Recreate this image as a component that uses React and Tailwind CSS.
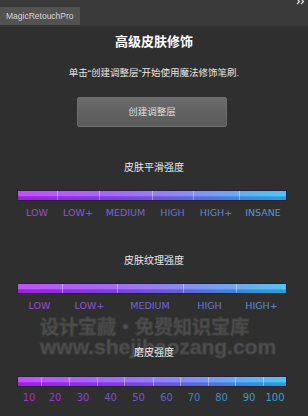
import React from "react";

const cjk = { fontFamily: '"Liberation Sans","Noto Sans CJK SC",sans-serif' };

function Bar({ widths, labels, colors, labelClass }) {
  return (
    <div className="ml-[17px] w-[270px] flex flex-col">
      <div className="relative h-[11px] w-full border border-[#2a1f3a] bg-[linear-gradient(to_right,#b126f7,#8f45f2_35%,#6f6cee_60%,#4a92ec_80%,#28b5ea)] flex overflow-hidden">
        {widths.map((w, i) => (
          <div
            key={i}
            className={i < widths.length - 1 ? "h-full shrink-0 border-r border-white/40" : "h-full flex-1"}
            style={i < widths.length - 1 ? { width: w } : undefined}
          />
        ))}
        <div className="absolute left-0 right-0 top-0 h-[5px] bg-white/20" />
        <div className="absolute left-0 right-0 bottom-0 h-[3px] bg-black/10" />
      </div>
      <div className={"flex " + labelClass} style={{ fontFamily: '"DejaVu Sans","Liberation Sans",sans-serif' }}>
        {widths.map((w, i) => (
          <div
            key={i}
            className="shrink-0 flex justify-center whitespace-nowrap"
            style={{ width: w, color: colors[i] }}
          >
            {labels[i]}
          </div>
        ))}
      </div>
    </div>
  );
}

export default function App() {
  return (
    <div className="relative w-[308px] h-[416px] overflow-hidden bg-[#2f2f2f]" style={cjk}>
      <div className="h-[27px] bg-[#3a3a3a] flex flex-col relative">
        <div className="h-[7px]" />
        <div className="h-[18px] w-[80px] bg-[#525252] flex items-center pl-[6px] text-[8.5px] text-[#d6d6d6] whitespace-nowrap" style={{ fontFamily: '"Liberation Sans",sans-serif' }}>
          MagicRetouchPro
        </div>
        <div className="h-[2px] bg-[#353535]" />
        <svg className="absolute right-[3px] top-[-2px]" width="9" height="7" viewBox="0 0 9 7">
          <path d="M1 1 L3.5 3.5 L1 6 M5 1 L7.5 3.5 L5 6" stroke="#e0e0e0" strokeWidth="1.2" fill="none" />
        </svg>
      </div>

      <div className="flex flex-col">
        <div className="mt-[6px] text-center leading-[18px] text-[13px] font-bold text-white">高级皮肤修饰</div>
        <div className="mt-[15px] text-center leading-[14px] text-[9.5px] text-[#e6e6e6]">
          单击“创建调整层”开始使用魔法修饰笔刷.
        </div>
        <div className="mt-[17px] self-start ml-[77px] w-[150px] h-[30px] rounded-[2px] border border-[#6e6e6e] bg-[linear-gradient(to_bottom,#6a6a6a,#5a5a5a)] flex items-center justify-center text-[9.5px] text-[#dedede]">
          创建调整层
        </div>

        <div className="mt-[34px] text-center leading-[14px] text-[10px] text-[#e8e8e8]">皮肤平滑强度</div>
        <div className="mt-[15px]">
          <Bar
            widths={[40, 42, 53, 41, 46, 48]}
            labels={["LOW", "LOW+", "MEDIUM", "HIGH", "HIGH+", "INSANE"]}
            colors={["#9a4fd2", "#8c55d6", "#7c60d8", "#6a72d2", "#5d84d2", "#4f98d2"]}
            labelClass="mt-[6px] leading-[12px] text-[9.5px]"
          />
        </div>

        <div className="mt-[35px] text-center leading-[14px] text-[10px] text-[#e8e8e8]">皮肤纹理强度</div>
        <div className="mt-[15px]">
          <Bar
            widths={[45, 55, 66, 53, 51]}
            labels={["LOW", "LOW+", "MEDIUM", "HIGH", "HIGH+"]}
            colors={["#9a4cd4", "#8a58d8", "#7463d8", "#627cd4", "#5a8ed4"]}
            labelClass="mt-[6px] leading-[12px] text-[9.5px]"
          />
        </div>

        <div className="relative z-10 mt-[34px] text-center leading-[14px] text-[10px] text-[#f0f0f0]">磨皮强度</div>
        <div className="mt-[16px]">
          <Bar
            widths={[24, 28, 28, 27, 29, 27, 28, 27, 28, 24]}
            labels={["10", "20", "30", "40", "50", "60", "70", "80", "90", "100"]}
            colors={["#a232d4", "#9a36d2", "#8e40d2", "#7e4ed2", "#6c5ad0", "#5a68cc", "#4a7cc8", "#3e8cc6", "#3a98c8", "#34a2cc"]}
            labelClass="mt-[5px] leading-[12px] text-[10px]"
          />
        </div>
      </div>

      <div className="pointer-events-none absolute left-[40px] top-[315px] flex flex-col items-start opacity-70">
        <div className="text-[19px] font-bold leading-[22px] text-[#5e5e5e]" style={{ fontFamily: '"Noto Sans CJK SC",sans-serif', WebkitTextStroke: "1px #4a4a4a" }}>
          设计宝藏·免费知识宝库
        </div>
        <div className="text-[21px] font-bold leading-[20px] text-[#5e5e5e]" style={{ fontFamily: '"Liberation Sans",sans-serif', WebkitTextStroke: "1px #4a4a4a" }}>
          www.shejibaozang.com
        </div>
      </div>
    </div>
  );
}
